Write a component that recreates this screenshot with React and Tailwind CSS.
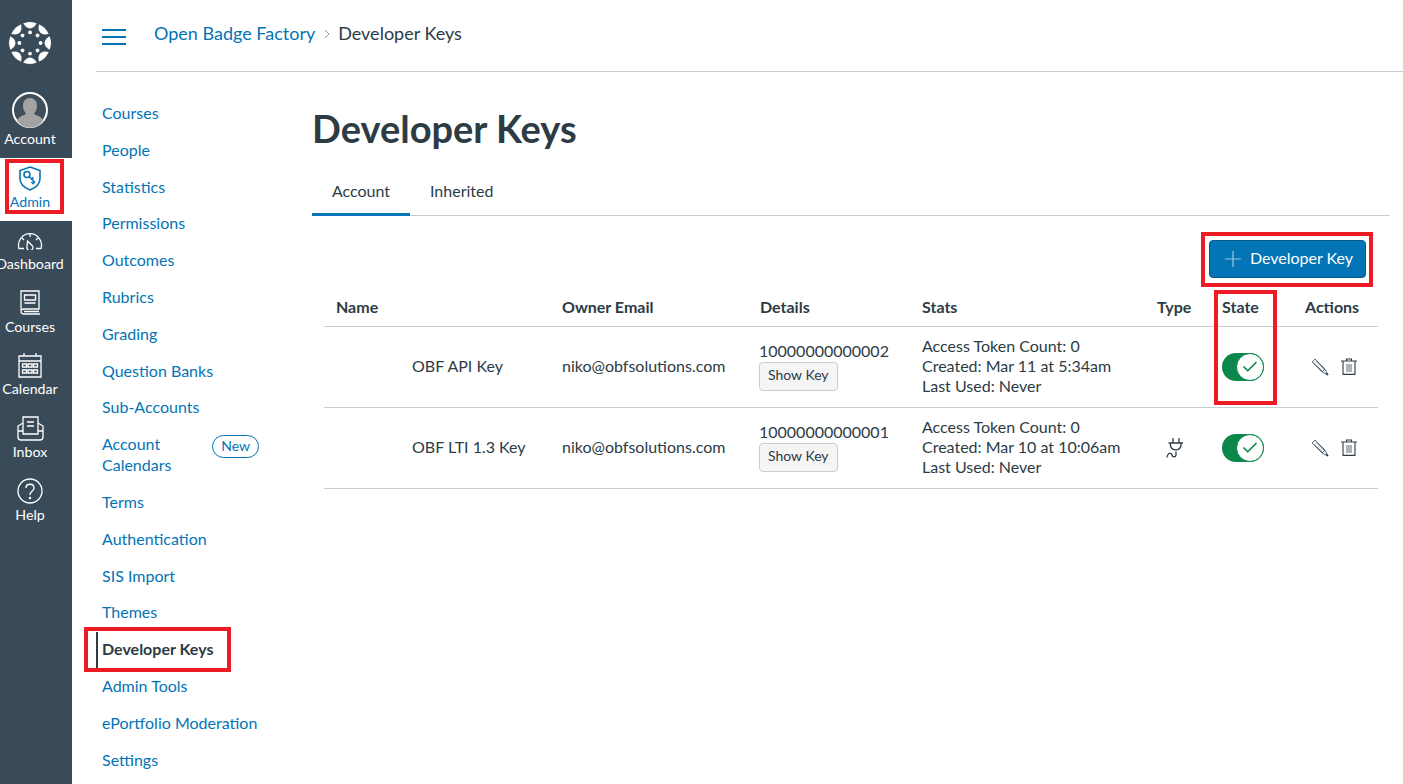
import { Plus, Check } from 'lucide-react';

const links = [
  'Courses', 'People', 'Statistics', 'Permissions', 'Outcomes', 'Rubrics', 'Grading',
  'Question Banks', 'Sub-Accounts',
];
const linksAfter = ['Terms', 'Authentication', 'SIS Import', 'Themes'];
const linksEnd = ['Admin Tools', 'ePortfolio Moderation', 'Settings'];

function Logo() {
  return (
    <svg width="44" height="44" viewBox="-22 -22 44 44" fill="white">
      {[0, 45, 90, 135, 180, 225, 270, 315].map((a) => (
        <g key={a} transform={`rotate(${a})`}>
          <path d="M-6.4 -19.4 Q0 -22.2 6.4 -19.4 Q3.6 -14.8 0 -14.8 Q-3.6 -14.8 -6.4 -19.4 Z" stroke="white" strokeWidth="0.6" strokeLinejoin="round" />
          <circle cx="0" cy="-10.6" r="1.9" />
        </g>
      ))}
    </svg>
  );
}

function NavItem({ label, children, active }) {
  return (
    <div className={`w-[60px] h-[62.8px] flex flex-col items-center pt-[4px] ${active ? 'text-[#0374b5]' : 'text-white'}`}>
      <div className="h-[30px] flex items-center justify-center">{children}</div>
      <div className={`${active ? 'mt-[2px]' : 'mt-[1px]'} text-[14.2px] leading-[16px] whitespace-nowrap`}>{label}</div>
    </div>
  );
}

function Toggle() {
  return (
    <div className="w-[42px] h-[28px] rounded-full bg-[#0b874b] flex items-center justify-end">
      <div className="w-[28px] h-[28px] rounded-full bg-white border border-[#0b874b] flex items-center justify-center">
        <Check size={18} strokeWidth={2.2} className="text-[#0b874b]" />
      </div>
    </div>
  );
}

function PlugIcon() {
  return (
    <svg width="18" height="22" viewBox="0 0 18 22" fill="none" stroke="#2d3b45" strokeWidth="1.3">
      <path d="M7 1 V6 M13 1 V6 M2.5 6 H17 M4.5 6 V9 A5.5 5.5 0 0 0 15 9 V6 M10 14.5 V17.5 C10 20.5 6.5 20.5 6 18 C5.5 16 3 16 2 17.5 C1.3 18.5 1 19.5 1 20.5" />
    </svg>
  );
}

function PencilIcon() {
  return (
    <svg width="18" height="18" viewBox="0 0 18 18" fill="none" stroke="#56636d" strokeWidth="0.9">
      <path d="M1 4 L4 1 L14 11 L17 17 L11 14 Z" fill="#eceef0" />
      <path d="M3 5.5 L12 14 M5.5 3 L14 12 M14 11 L11 14" />
      <path d="M15 15 L17 17" strokeWidth="1.4" stroke="#2d3b45" />
    </svg>
  );
}

function TrashIcon() {
  return (
    <svg width="16" height="17" viewBox="0 0 16 17" fill="none" stroke="#2d3b45" strokeWidth="1.1">
      <path d="M0 3 H16" stroke="#6b7780" strokeWidth="1.4" />
      <path d="M5.5 3 V1 H10.5 V3" />
      <path d="M2 3 V16.4 H14 V3" />
      <path d="M6 6 V14 M8 6 V14 M10 6 V14" stroke="#6b7780" />
    </svg>
  );
}

function Row({ name, id, created, plug }) {
  return (
    <tr className="border-b border-[#c7cdd1] h-[81px]">
      <td className="pl-[88px] pb-[2px]">{name}</td>
      <td className="pl-3 pb-[2px]">niko@obfsolutions.com</td>
      <td className="pl-[11px] pb-[2px]">
        <div className="leading-[20px]">{id}</div>
        <button className="mt-[1px] h-[29px] px-[8px] pb-[3px] text-[14px] bg-[#f5f5f5] border border-[#c7cdd1] rounded-[4px] block">Show Key</button>
      </td>
      <td className="pl-3 pb-[2px] leading-[20px]">
        <div>Access Token Count: 0</div>
        <div>Created: {created}</div>
        <div>Last Used: Never</div>
      </td>
      <td className="pl-[21px]">
        {plug && <PlugIcon />}
      </td>
      <td className="pl-3"><Toggle /></td>
      <td className="pl-[18px]">
        <div className="flex items-center gap-[12px]">
          <PencilIcon />
          <TrashIcon />
        </div>
      </td>
    </tr>
  );
}

export default function App() {
  return (
    <div className="w-[1403px] h-[784px] overflow-hidden flex bg-white text-[16px] text-[#2d3b45] font-['Lato','Liberation_Sans',sans-serif]">
      <nav className="w-[72px] shrink-0 bg-[#394b58] flex flex-col">
        <div className="h-[84px] w-[60px] flex items-start justify-center pt-[21px]"><Logo /></div>
        <div className="h-[74px] w-[60px] flex flex-col items-center text-white pt-[8px]">
          <svg width="36" height="36" viewBox="0 0 36 36">
            <circle cx="18" cy="18" r="17" fill="#3f4e5a" stroke="white" strokeWidth="2" />
            <path d="M18 6 C23 6 25 10 25 14 C25 18 23 20 22 22 C26 24 30 25 31 29 A16 16 0 0 1 5 29 C6 25 10 24 14 22 C13 20 11 18 11 14 C11 10 13 6 18 6 Z" fill="#a3a3a3" />
          </svg>
          <div className="text-[14.2px] leading-[18px] mt-[2px] whitespace-nowrap">Account</div>
        </div>
        <div className="relative bg-white h-[62.8px]">
          <NavItem label="Admin" active>
            <svg width="22" height="25" viewBox="0 0 22 25" fill="none" stroke="#0374b5" strokeWidth="1.6" className="mt-[3px]">
              <path d="M11 1 L21 4.5 V12.5 C21 18 16 22 11 24 C6 22 1 18 1 12.5 V4.5 Z" />
              <circle cx="8" cy="8.5" r="3" />
              <path d="M10 10.5 L15.5 16 L14 17.5 L12.5 16 M12.5 13 L14.5 11.5" />
            </svg>
          </NavItem>
          <div className="absolute left-[5px] top-[1px] w-[59px] h-[55px] border-[4px] border-[#ed1c24]" />
        </div>
        <NavItem label="Dashboard">
          <svg width="26" height="18" viewBox="0 0 26 18" fill="none" stroke="white" strokeWidth="1.3" className="mt-[2px]">
            <path d="M7 16.5 H2 A11.5 11.5 0 1 1 24 16.5 H19" />
            <path d="M10.5 9 L15.5 14 A3 3 0 1 1 10 15 Z" />
            <path d="M13 2 V5 M5 6 L7 8 M21 6 L19 8" />
          </svg>
        </NavItem>
        <NavItem label="Courses">
          <svg width="22" height="26" viewBox="0 0 22 26" fill="none" stroke="white" strokeWidth="1.3">
            <path d="M2 20 V1 H20 V19 H5 C1 19 1 24 5 24 H21 M5 21.5 H20" />
            <path d="M5.5 5 H16.5 V10 H5.5 Z M5.5 13 H16.5" />
          </svg>
        </NavItem>
        <NavItem label="Calendar">
          <svg width="24" height="26" viewBox="0 0 24 26" fill="none" stroke="white" strokeWidth="1.3">
            <path d="M1 4 H23 V25 H1 Z M1 9 H23 M6 1 V4 M18 1 V4" />
            <path d="M4.5 12 H8.5 V15 H4.5 Z M10 12 H14 V15 H10 Z M15.5 12 H19.5 V15 H15.5 Z M4.5 18 H8.5 V21 H4.5 Z M10 18 H14 V21 H10 Z M15.5 18 H19.5 V21 H15.5 Z" />
          </svg>
        </NavItem>
        <NavItem label="Inbox">
          <svg width="27" height="25" viewBox="0 0 27 25" fill="none" stroke="white" strokeWidth="1.3">
            <path d="M6 15 V1 H21 V15" />
            <path d="M10 6 H17 M10 10 H17" />
            <path d="M6 7 L1 10 V21 A3 3 0 0 0 4 24 H23 A3 3 0 0 0 26 21 V10 L21 7 M1 15 H6 V18 H21 V15 H26" />
          </svg>
        </NavItem>
        <NavItem label="Help">
          <svg width="26" height="26" viewBox="0 0 26 26" fill="none" stroke="white" strokeWidth="1.3">
            <circle cx="13" cy="13" r="12" />
            <path d="M9 10 C9 5 17 5 17 10 C17 13 13 13 13 17" />
            <circle cx="13" cy="20" r="0.6" fill="white" />
          </svg>
        </NavItem>
      </nav>

      <div className="flex-1 min-w-0 flex flex-col pl-[24px]">
        <header className="h-[72px] shrink-0 border-b border-[#c7cdd1] flex items-center pl-[6px] pb-[5px]">
          <div className="w-[24px] flex flex-col gap-[5px] mt-[8px]">
            <div className="h-[2px] bg-[#0374b5]" />
            <div className="h-[2px] bg-[#0374b5]" />
            <div className="h-[2px] bg-[#0374b5]" />
          </div>
          <div className="ml-[28px] text-[18px] flex items-center">
            <span className="text-[#0374b5]">Open Badge Factory</span>
            <svg width="6" height="10" viewBox="0 0 6 10" fill="none" stroke="#8b969e" strokeWidth="1" className="ml-[9px] mr-[8px] mt-[2px]">
              <path d="M1 1 L5 5 L1 9" />
            </svg>
            <span>Developer Keys</span>
          </div>
        </header>

        <div className="flex flex-1">
          <aside className="w-[216px] shrink-0 pl-[6px] pt-[22.7px] text-[#0374b5]">
            {links.map((l) => <div key={l} className="h-[36.8px] flex items-center">{l}</div>)}
            <div className="h-[57.7px] pb-[2px] flex items-center justify-between w-[157px]">
              <div className="leading-[21px]">Account<br />Calendars</div>
              <div className="mb-[14px] h-[23px] px-[8px] border border-[#0374b5] rounded-full text-[14px] leading-[20px]">New</div>
            </div>
            {linksAfter.map((l) => <div key={l} className="h-[36.8px] flex items-center">{l}</div>)}
            <div className="relative h-[36.8px] flex items-center font-bold text-[#2d3b45]">
              Developer Keys
              <div className="absolute left-[-6px] top-[1px] w-[2px] h-[36px] bg-[#2d3b45]" />
              <div className="absolute left-[-18px] top-[-4px] w-[147px] h-[45px] border-[4px] border-[#ed1c24]" />
            </div>
            {linksEnd.map((l) => <div key={l} className="h-[36.8px] flex items-center">{l}</div>)}
          </aside>

          <main className="w-[1078px] shrink-0 pt-[31px]">
            <h1 className="text-[38px] font-bold leading-[50px]">Developer Keys</h1>
            <div className="mt-[14px] flex border-b border-[#c7cdd1] h-[49px]">
              <div className="w-[98px] h-[49px] pt-[2px] flex items-center justify-center border-b-[3px] border-[#0374b5]">Account</div>
              <div className="ml-[20px] h-[48px] flex items-center">Inherited</div>
            </div>

            <div className="mt-[24px] flex justify-end pr-[24px]">
              <div className="relative">
                <button className="w-[157px] h-[38px] pb-[3px] flex items-center justify-center gap-[4px] bg-[#0374b5] border border-[#025a8d] rounded-[4px] text-white">
                  <Plus size={26} strokeWidth={1.1} className="text-[#9dc7e0] mt-[3px] -ml-[2px]" />
                  Developer Key
                </button>
                <div className="absolute left-[-8px] top-[-8px] w-[172px] h-[55px] border-[4px] border-[#ed1c24]" />
              </div>
            </div>

            <div className="relative ml-[12px] w-[1054px]">
              <table className="w-[1054px] table-fixed">
                <thead>
                  <tr className="border-b border-[#c7cdd1] h-[48px] text-left">
                    <th className="w-[226px] pl-3 pt-[10px] font-bold">Name</th>
                    <th className="w-[198px] pl-3 pt-[10px] font-bold">Owner Email</th>
                    <th className="w-[162px] pl-3 pt-[10px] font-bold">Details</th>
                    <th className="w-[235px] pl-3 pt-[10px] font-bold">Stats</th>
                    <th className="w-[65px] pl-3 pt-[10px] font-bold">Type</th>
                    <th className="w-[83px] pl-3 pt-[10px] font-bold">State</th>
                    <th className="pl-3 pt-[10px] font-bold">Actions</th>
                  </tr>
                </thead>
                <tbody>
                  <Row name="OBF API Key" id="10000000000002" created="Mar 11 at 5:34am" />
                  <Row name="OBF LTI 1.3 Key" id="10000000000001" created="Mar 10 at 10:06am" plug />
                </tbody>
              </table>
              <div className="absolute left-[890px] top-[12px] w-[63px] h-[115px] border-[4px] border-[#ed1c24]" />
            </div>
          </main>
        </div>
      </div>
    </div>
  );
}
